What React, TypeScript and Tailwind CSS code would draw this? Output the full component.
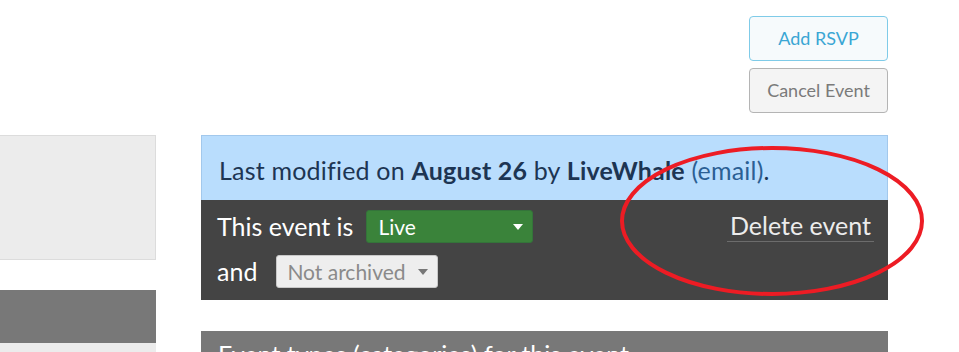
export default function App() {
  return (
    <div className="relative w-[959px] h-[352px] overflow-hidden bg-white font-['Lato',sans-serif]">
      <div className="flex">
        {/* left column */}
        <div className="w-[156px] shrink-0 pt-[135px]">
          <div className="h-[125px] bg-[#ececec] border border-l-0 border-[#dcdcdc]" />
          <div className="mt-[30px] h-[53px] bg-[#787878]" />
          <div className="h-[20px] bg-[#ececec]" />
        </div>

        {/* right column */}
        <div className="ml-[45px] w-[687px] shrink-0">
          <div className="flex flex-col items-end gap-[7px] pt-[16px]">
            <button className="w-[139px] h-[45px] rounded-[4px] border border-[#7fcbe8] bg-[#f6fafc] text-[18px] text-[#3aa6d4]">
              Add RSVP
            </button>
            <button className="w-[139px] h-[45px] rounded-[4px] border border-[#b4b4b4] bg-[#f4f4f4] text-[18px] text-[#7a7a7a]">
              Cancel Event
            </button>
          </div>

          <div className="mt-[22px]">
            <div className="h-[65px] flex items-center px-[17px] bg-[#b9ddfd] border border-b-0 border-[#a2c8ec] text-[25px] tracking-[0.2px] text-[#1d3553] pt-[6px]">
              <span>
                Last modified on <b>August 26</b> by <b>LiveWhale</b>{" "}
                <span className="text-[#2b5f94]">(email)</span>.
              </span>
            </div>
            <div className="h-[100px] bg-[#444444] pl-[16px] pr-[14px] pt-[10px] flex justify-between text-white text-[25px] leading-[33px]">
              <div className="flex flex-col gap-[12px]">
                <div className="flex items-center gap-[13px]">
                  <span>This event is</span>
                  <div className="w-[167px] h-[33px] rounded-[3px] bg-[#3a833a] border border-[#34743a] flex items-center justify-between pl-[11px] pr-[9px] text-[21px]">
                    <span>Live</span>
                    <span className="w-0 h-0 border-l-[5px] border-r-[5px] border-t-[6px] border-l-transparent border-r-transparent border-t-white" />
                  </div>
                </div>
                <div className="flex items-center gap-[19px]">
                  <span>and</span>
                  <div className="w-[162px] h-[33px] rounded-[3px] bg-[#eeeeee] border border-[#c8c8c8] flex items-center justify-between pl-[10px] pr-[9px] text-[21px] text-[#8a8a8a]">
                    <span>Not archived</span>
                    <span className="w-0 h-0 border-l-[5px] border-r-[5px] border-t-[6px] border-l-transparent border-r-transparent border-t-[#777777]" />
                  </div>
                </div>
              </div>
              <div>
                <span className="block border-b border-[#6c6c6c] px-[3px] pb-[1px] leading-[30px] text-[#ececec]">
                  Delete event
                </span>
              </div>
            </div>

            <div className="mt-[31px] h-[30px] bg-[#787878] px-[17px] pt-[11px] text-[25px] text-white leading-none">
              Event types (categories) for this event
            </div>
          </div>
        </div>
      </div>

      {/* annotation */}
      <svg className="absolute left-0 top-0" width="959" height="352">
        <ellipse cx="772" cy="221" rx="150" ry="73" fill="none" stroke="#ed1c24" strokeWidth="4" />
      </svg>
    </div>
  )
}
